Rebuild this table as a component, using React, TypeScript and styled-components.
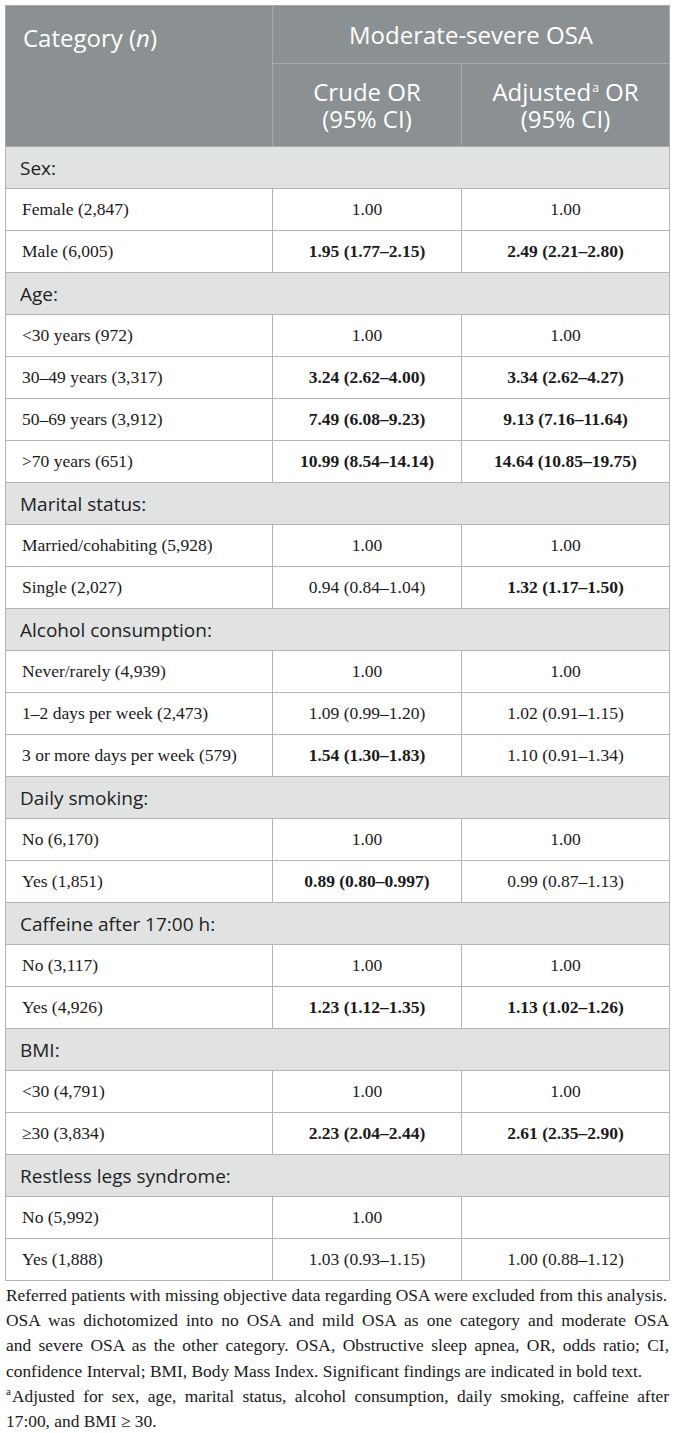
import React from "react";
import styled, { createGlobalStyle } from "styled-components";

const Global = createGlobalStyle`
  html, body { margin: 0; padding: 0; background: #ffffff; }
  body { width: 674px; }
`;

const Page = styled.div`
  padding: 5px 5px 0 5px;
  width: 674px;
  box-sizing: border-box;
`;

const Table = styled.table`
  width: 664px;
  border-collapse: collapse;
  table-layout: fixed;
  border: 1px solid #c4c4c4;
`;

const HeadCell = styled.th<{ $h: number }>`
  background: #8b9092;
  color: #ffffff;
  font-family: "Open Sans", "Liberation Sans", sans-serif;
  font-weight: 400;
  font-size: 24px;
  line-height: 27.5px;
  height: ${(p) => p.$h}px;
  padding: 0;
  border: 1px solid #a6aaac;
  text-align: center;
  vertical-align: middle;
  box-sizing: border-box;
`;

const CategoryHead = styled(HeadCell)`
  text-align: left;
  vertical-align: top;
  padding: 18px 0 0 17px;
`;

const Sup = styled.sup`
  font-size: 12px;
  line-height: 0;
  vertical-align: 0;
  position: relative;
  top: -9px;
  margin-left: 1px;
`;

const SectionCell = styled.td`
  background: #e1e3e2;
  color: #222222;
  font-family: "Open Sans", "Liberation Sans", sans-serif;
  font-size: 19px;
  height: 42px;
  padding: 0 0 0 14px;
  border: 1px solid #b4b4b4;
  box-sizing: border-box;
  vertical-align: middle;
`;

const DataCell = styled.td<{ $label?: boolean; $bold?: boolean }>`
  font-family: "Liberation Serif", "Times New Roman", serif;
  font-size: 17.5px;
  color: #1a1a1a;
  font-weight: ${(p) => (p.$bold ? 700 : 400)};
  text-align: ${(p) => (p.$label ? "left" : "center")};
  padding: ${(p) => (p.$label ? "0 0 0 16px" : "0")};
  height: 42px;
  border: 1px solid #b4b4b4;
  box-sizing: border-box;
  vertical-align: middle;
`;

const Notes = styled.div`
  margin-top: 2px;
  padding-left: 1px;
  width: 663px;
  font-family: "Liberation Serif", "Times New Roman", serif;
  font-size: 17.4px;
  line-height: 25.2px;
  color: #1a1a1a;
`;

const NoteLine = styled.div<{ $justify?: boolean }>`
  text-align: ${(p) => (p.$justify ? "justify" : "left")};
  text-align-last: ${(p) => (p.$justify ? "justify" : "left")};
  white-space: nowrap;
`;

const NoteSup = styled.sup`
  font-size: 11px;
  line-height: 0;
  vertical-align: 0;
  position: relative;
  top: -7px;
  margin-right: 1px;
`;

type Row = { label: React.ReactNode; crude: string; adj: string; cb?: boolean; ab?: boolean };
type Section = { title: string; rows: Row[] };

const data: Section[] = [
  {
    title: "Sex:",
    rows: [
      { label: "Female (2,847)", crude: "1.00", adj: "1.00" },
      { label: "Male (6,005)", crude: "1.95 (1.77–2.15)", adj: "2.49 (2.21–2.80)", cb: true, ab: true },
    ],
  },
  {
    title: "Age:",
    rows: [
      { label: "<30 years (972)", crude: "1.00", adj: "1.00" },
      { label: "30–49 years (3,317)", crude: "3.24 (2.62–4.00)", adj: "3.34 (2.62–4.27)", cb: true, ab: true },
      { label: "50–69 years (3,912)", crude: "7.49 (6.08–9.23)", adj: "9.13 (7.16–11.64)", cb: true, ab: true },
      { label: ">70 years (651)", crude: "10.99 (8.54–14.14)", adj: "14.64 (10.85–19.75)", cb: true, ab: true },
    ],
  },
  {
    title: "Marital status:",
    rows: [
      { label: "Married/cohabiting (5,928)", crude: "1.00", adj: "1.00" },
      { label: "Single (2,027)", crude: "0.94 (0.84–1.04)", adj: "1.32 (1.17–1.50)", ab: true },
    ],
  },
  {
    title: "Alcohol consumption:",
    rows: [
      { label: "Never/rarely (4,939)", crude: "1.00", adj: "1.00" },
      { label: "1–2 days per week (2,473)", crude: "1.09 (0.99–1.20)", adj: "1.02 (0.91–1.15)" },
      { label: "3 or more days per week (579)", crude: "1.54 (1.30–1.83)", adj: "1.10 (0.91–1.34)", cb: true },
    ],
  },
  {
    title: "Daily smoking:",
    rows: [
      { label: "No (6,170)", crude: "1.00", adj: "1.00" },
      { label: "Yes (1,851)", crude: "0.89 (0.80–0.997)", adj: "0.99 (0.87–1.13)", cb: true },
    ],
  },
  {
    title: "Caffeine after 17:00 h:",
    rows: [
      { label: "No (3,117)", crude: "1.00", adj: "1.00" },
      { label: "Yes (4,926)", crude: "1.23 (1.12–1.35)", adj: "1.13 (1.02–1.26)", cb: true, ab: true },
    ],
  },
  {
    title: "BMI:",
    rows: [
      { label: "<30 (4,791)", crude: "1.00", adj: "1.00" },
      { label: "≥30 (3,834)", crude: "2.23 (2.04–2.44)", adj: "2.61 (2.35–2.90)", cb: true, ab: true },
    ],
  },
  {
    title: "Restless legs syndrome:",
    rows: [
      { label: "No (5,992)", crude: "1.00", adj: "" },
      { label: "Yes (1,888)", crude: "1.03 (0.93–1.15)", adj: "1.00 (0.88–1.12)" },
    ],
  },
];

export default function App() {
  return (
    <Page>
      <Global />
      <Table>
        <colgroup>
          <col style={{ width: "267px" }} />
          <col style={{ width: "189px" }} />
          <col style={{ width: "208px" }} />
        </colgroup>
        <thead>
          <tr>
            <CategoryHead rowSpan={2} $h={58}>
              Category (<i>n</i>)
            </CategoryHead>
            <HeadCell colSpan={2} $h={58}>
              Moderate-severe OSA
            </HeadCell>
          </tr>
          <tr>
            <HeadCell $h={83}>
              Crude OR
              <br />
              (95% CI)
            </HeadCell>
            <HeadCell $h={83}>
              Adjusted<Sup>a</Sup> OR
              <br />
              (95% CI)
            </HeadCell>
          </tr>
        </thead>
        <tbody>
          {data.map((s) => (
            <React.Fragment key={s.title}>
              <tr>
                <SectionCell colSpan={3}>{s.title}</SectionCell>
              </tr>
              {s.rows.map((r, i) => (
                <tr key={i}>
                  <DataCell $label>{r.label}</DataCell>
                  <DataCell $bold={r.cb}>{r.crude}</DataCell>
                  <DataCell $bold={r.ab}>{r.adj}</DataCell>
                </tr>
              ))}
            </React.Fragment>
          ))}
        </tbody>
      </Table>
      <Notes>
        <NoteLine>Referred patients with missing objective data regarding OSA were excluded from this analysis.</NoteLine>
        <NoteLine $justify>OSA was dichotomized into no OSA and mild OSA as one category and moderate OSA</NoteLine>
        <NoteLine $justify>and severe OSA as the other category. OSA, Obstructive sleep apnea, OR, odds ratio; CI,</NoteLine>
        <NoteLine>confidence Interval; BMI, Body Mass Index. Significant findings are indicated in bold text.</NoteLine>
        <NoteLine $justify>
          <NoteSup>a</NoteSup>Adjusted for sex, age, marital status, alcohol consumption, daily smoking, caffeine after
        </NoteLine>
        <NoteLine>17:00, and BMI ≥ 30.</NoteLine>
      </Notes>
    </Page>
  );
}
